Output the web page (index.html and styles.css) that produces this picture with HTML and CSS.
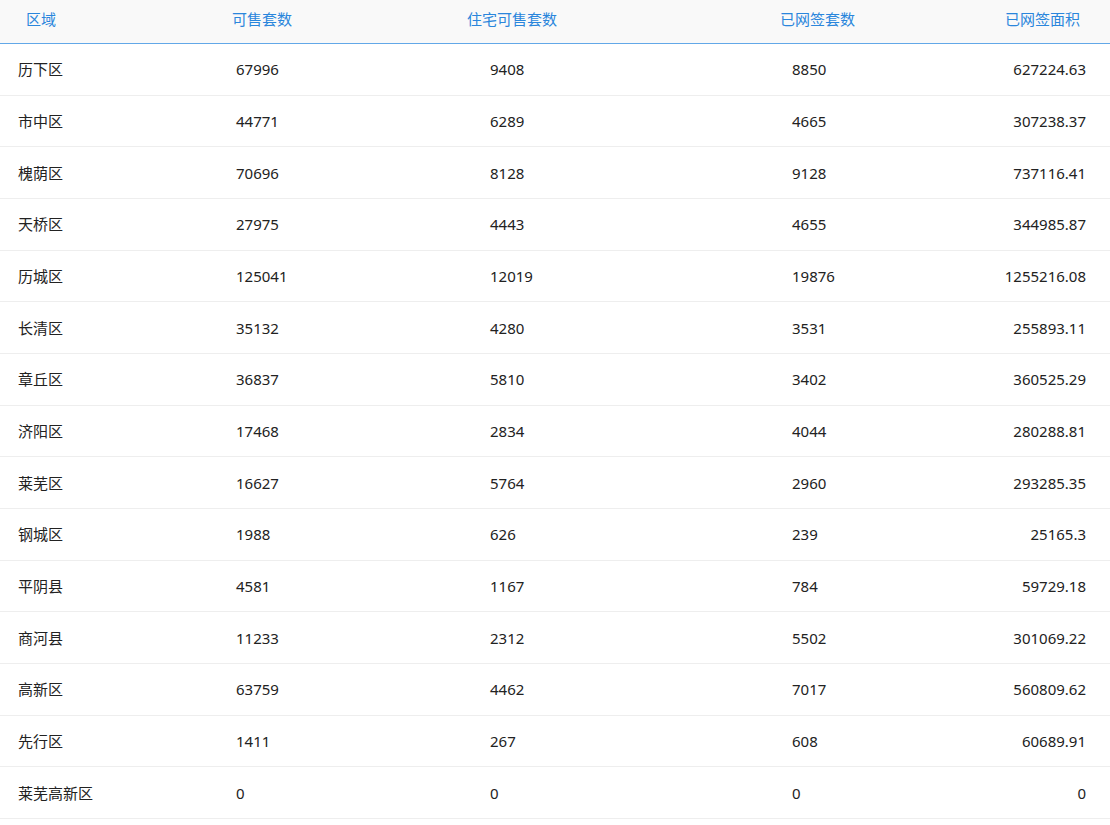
FILE: index.html
```html
<!DOCTYPE html>
<html lang="zh">
<head>
<meta charset="utf-8">
<title>区域统计</title>
<link rel="stylesheet" href="styles.css">
</head>
<body>
<div class="table">
  <div class="head">
    <div class="hc">区域</div>
    <div class="hc">可售套数</div>
    <div class="hc">住宅可售套数</div>
    <div class="hc">已网签套数</div>
    <div class="hc">已网签面积</div>
  </div>
  <div class="body">
    <div class="row"><div>历下区</div><div>67996</div><div>9408</div><div>8850</div><div class="num">627224.63</div></div>
    <div class="row"><div>市中区</div><div>44771</div><div>6289</div><div>4665</div><div class="num">307238.37</div></div>
    <div class="row"><div>槐荫区</div><div>70696</div><div>8128</div><div>9128</div><div class="num">737116.41</div></div>
    <div class="row"><div>天桥区</div><div>27975</div><div>4443</div><div>4655</div><div class="num">344985.87</div></div>
    <div class="row"><div>历城区</div><div>125041</div><div>12019</div><div>19876</div><div class="num">1255216.08</div></div>
    <div class="row"><div>长清区</div><div>35132</div><div>4280</div><div>3531</div><div class="num">255893.11</div></div>
    <div class="row"><div>章丘区</div><div>36837</div><div>5810</div><div>3402</div><div class="num">360525.29</div></div>
    <div class="row"><div>济阳区</div><div>17468</div><div>2834</div><div>4044</div><div class="num">280288.81</div></div>
    <div class="row"><div>莱芜区</div><div>16627</div><div>5764</div><div>2960</div><div class="num">293285.35</div></div>
    <div class="row"><div>钢城区</div><div>1988</div><div>626</div><div>239</div><div class="num">25165.3</div></div>
    <div class="row"><div>平阴县</div><div>4581</div><div>1167</div><div>784</div><div class="num">59729.18</div></div>
    <div class="row"><div>商河县</div><div>11233</div><div>2312</div><div>5502</div><div class="num">301069.22</div></div>
    <div class="row"><div>高新区</div><div>63759</div><div>4462</div><div>7017</div><div class="num">560809.62</div></div>
    <div class="row"><div>先行区</div><div>1411</div><div>267</div><div>608</div><div class="num">60689.91</div></div>
    <div class="row"><div>莱芜高新区</div><div>0</div><div>0</div><div>0</div><div class="num">0</div></div>
  </div>
</div>
</body>
</html>
```
FILE: styles.css
```css
html, body {
  margin: 0;
  padding: 0;
  background: #ffffff;
}
body {
  font-family: "Noto Sans", "Noto Sans CJK SC", sans-serif;
  font-size: 15px;
  color: #222222;
}
.table {
  width: 1110px;
}
.head {
  display: grid;
  grid-template-columns: 206px 235px 313px 225px 1fr;
  align-items: center;
  height: 37px;
  padding: 0 0 6px 26px;
  background: #f9f9f9;
  border-bottom: 1px solid #62a8e8;
  color: #2a86dc;
}
.hc {
  line-height: 20px;
  white-space: nowrap;
}
.row {
  display: grid;
  grid-template-columns: 218px 254px 302px 1fr 200px;
  align-items: center;
  height: 50.67px;
  padding: 0 24px 0 18px;
  border-bottom: 1px solid #eeeeee;
  line-height: 20px;
  white-space: nowrap;
}
.row .num {
  text-align: right;
}
```
